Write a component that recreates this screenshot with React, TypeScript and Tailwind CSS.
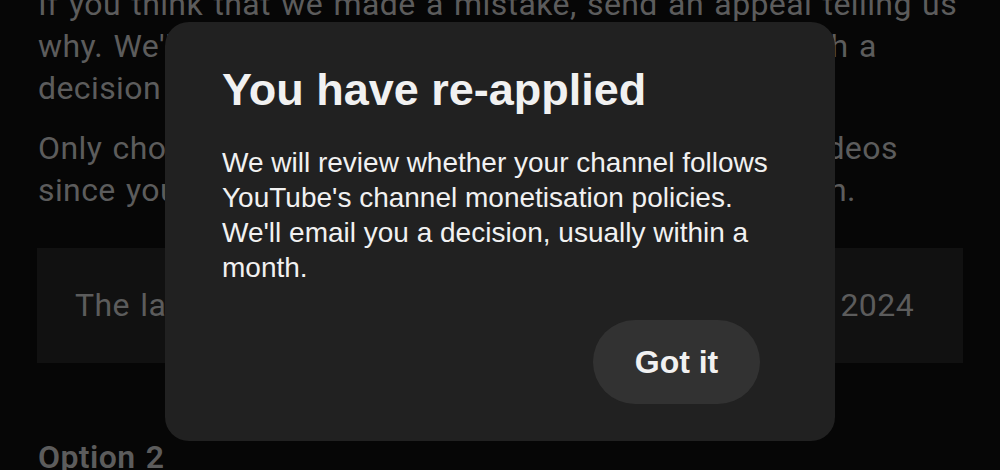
export default function App() {
  return (
    <div className="relative w-[1000px] h-[470px] overflow-hidden bg-[#060606] font-['Roboto',sans-serif]">
      <div className="px-[38px] text-[32px] leading-[42px] tracking-[0.4px] [word-spacing:2px] text-[#5c5c5c]">
        <div className="-mt-[17px] whitespace-nowrap">
          <div>If you think that we made a mistake, send an appeal telling us</div>
          <div>why. We'll review your channel again and get back with a</div>
          <div>decision within two weeks.</div>
        </div>
        <div className="mt-[18px] whitespace-nowrap">
          <div>Only choose this option if you've not uploaded new videos</div>
          <div>since your last review and you'd like a second decision.</div>
        </div>
        <div className="mt-[37px] -mx-[1px] h-[115px] bg-[#111111] px-[38px] py-[36px] whitespace-nowrap">
          The last time we reviewed your channel was 1 May 2024
        </div>
        <div className="mt-[73px] font-semibold">Option 2</div>
      </div>

      <div className="absolute left-[165px] top-[22px] w-[670px] h-[419px] rounded-[24px] bg-[#212121] pt-[43px] pl-[57px] font-['Liberation_Sans',Arial,sans-serif] text-[#f1f1f1]">
        <h1 className="text-[45px] leading-[50px] font-bold">You have re-applied</h1>
        <p className="mt-[30px] w-[560px] text-[28px] leading-[35px]">
          We will review whether your channel follows YouTube's channel monetisation policies.
          We'll email you a decision, usually within a month.
        </p>
        <div className="mt-[35px] flex justify-end pr-[75px]">
          <button className="w-[167px] h-[84px] rounded-full bg-[#323232] text-[32px] font-bold text-[#f1f1f1]">
            Got it
          </button>
        </div>
      </div>
    </div>
  )
}
